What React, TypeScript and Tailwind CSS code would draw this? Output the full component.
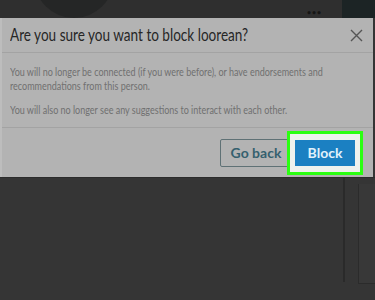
export default function App() {
  return (
    <main className="h-[300px] w-[375px] overflow-hidden bg-[#353535] font-['Lato',sans-serif]">
      <div className="relative flex h-[18px] bg-[#2f2f2f]">
        <div className="absolute left-[34px] top-[-62px] h-[80px] w-[80px] rounded-full bg-[#252626]" />
        <span className="absolute left-[307px] top-[9px] text-[7px] font-bold leading-none tracking-[1px] text-[#151515]">
          •••
        </span>
        <div className="ml-auto w-[33px] bg-[#1c2425]" />
      </div>

      <section className="w-[373px] border-l-2 border-[#bdbdbd] bg-[#b3b3b3]">
        <header className="flex h-[35px] items-center justify-between border-b border-[#a3a3a3] pl-[8px] pr-[10px]">
          <h1 className="origin-left scale-x-[0.775] whitespace-nowrap text-[17.5px] leading-none text-[#262626]">
            Are you sure you want to block loorean?
          </h1>
          <svg width="13" height="13" viewBox="0 0 13 13" className="mt-[1px]">
            <path d="M1 1L12 12M12 1L1 12" stroke="#555" strokeWidth="1.4" />
          </svg>
        </header>

        <div className="border-b border-[#a3a3a3] pb-[10px] pl-[8px] pt-[12px] text-[#707070]">
          <p className="origin-left scale-x-[0.75] whitespace-nowrap text-[12px] leading-[14px]">
            You will no longer be connected (if you were before), or have endorsements and
            <br />
            recommendations from this person.
          </p>
          <p className="mt-[10px] origin-left scale-x-[0.75] whitespace-nowrap text-[12px] leading-[14px]">
            You will also no longer see any suggestions to interact with each other.
          </p>
        </div>

        <div className="flex h-[49px] items-center justify-end pr-[10px]">
          <button className="h-[28px] w-[72px] rounded-[2px] border border-[#5f7175] text-[14px] font-bold text-[#35606e]">
            Go back
          </button>
          <div className="ml-[-5px] flex h-[44px] w-[76px] items-center justify-center border-[3px] border-[#2bff12] bg-[#eef2ee]">
            <button className="h-[26px] w-[60px] bg-[#1b80c2] text-[14px] font-bold text-[#e2f1fb]">
              Block
            </button>
          </div>
        </div>
      </section>

      <div className="flex h-[105px] border-t border-[#2c2c2c]">
        <div className="ml-auto w-[2px] bg-[#2a2a2a]" />
        <div className="ml-[13px] mt-[6px] h-[100px] w-[17px] border-b border-l border-[#2b2b2b] bg-[#383838]" />
      </div>
    </main>
  );
}
